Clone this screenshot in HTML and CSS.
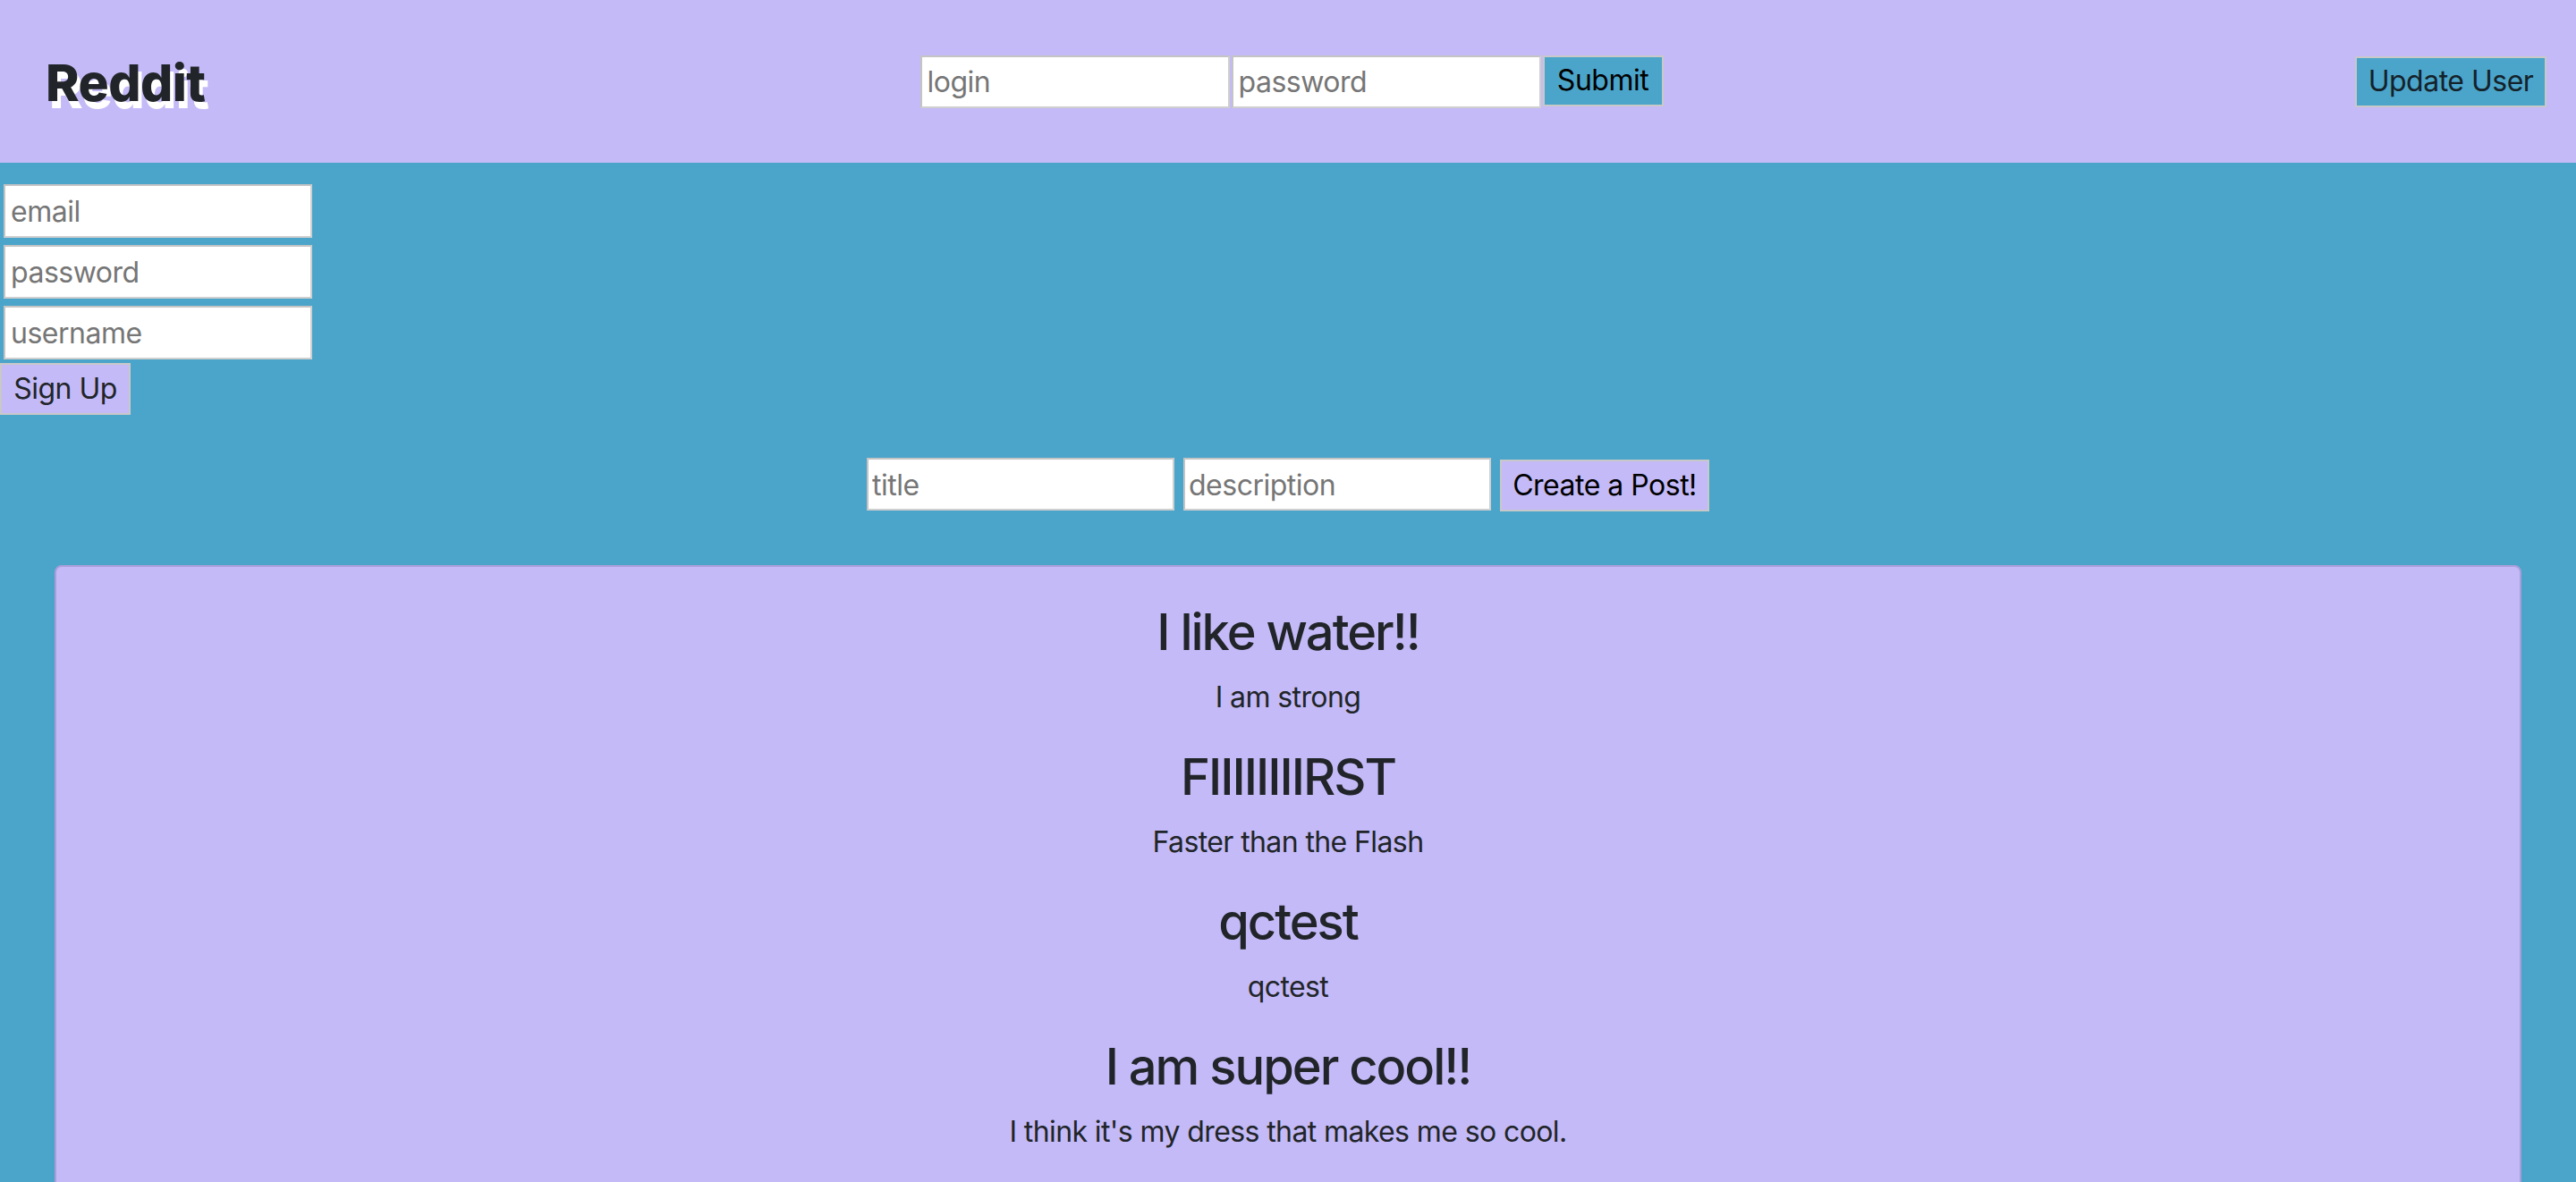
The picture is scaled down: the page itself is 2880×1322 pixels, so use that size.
FILE: index.html
```html
<!DOCTYPE html>
<html lang="en">
<head>
<meta charset="utf-8">
<title>Reddit</title>
<link rel="stylesheet" href="styles.css">
</head>
<body>
<header class="topbar">
  <div class="brand"><h1 class="logo">Reddit</h1></div>
  <form class="login">
    <input class="field" type="text" placeholder="login">
    <input class="field" type="password" placeholder="password">
    <button class="btn btn-blue btn-submit" type="button">Submit</button>
  </form>
  <button class="btn btn-blue btn-update" type="button">Update User</button>
</header>
<main class="content">
  <form class="signup">
    <input class="field field-signup" type="email" placeholder="email">
    <input class="field field-signup" type="password" placeholder="password">
    <input class="field field-signup" type="text" placeholder="username">
    <button class="btn btn-purple btn-signup" type="button">Sign Up</button>
  </form>
  <form class="newpost">
    <input class="field field-post" type="text" placeholder="title">
    <input class="field field-post" type="text" placeholder="description">
    <button class="btn btn-purple btn-create" type="button">Create a Post!</button>
  </form>
  <section class="card">
    <article class="post">
      <h3 class="post-title">I like water!!</h3>
      <p class="post-desc">I am strong</p>
    </article>
    <article class="post">
      <h3 class="post-title">FIIIIIIIIRST</h3>
      <p class="post-desc">Faster than the Flash</p>
    </article>
    <article class="post">
      <h3 class="post-title">qctest</h3>
      <p class="post-desc">qctest</p>
    </article>
    <article class="post">
      <h3 class="post-title">I am super cool!!</h3>
      <p class="post-desc">I think it's my dress that makes me so cool.</p>
    </article>
  </section>
</main>
</body>
</html>
```
FILE: styles.css
```css
html, body {
  margin: 0;
  padding: 0;
}
body {
  background: #4ba5ca;
  font-family: Inter, "Liberation Sans", sans-serif;
  color: #212529;
  font-size: 32px;
  line-height: 1.5;
  overflow: hidden;
  height: 1322px;
}
.topbar {
  background: #c4baf7;
  height: 182px;
  display: flex;
  align-items: center;
  justify-content: space-between;
  padding: 0 33px 0 51px;
  box-sizing: border-box;
}
.brand {
  width: 204px;
}
.logo {
  margin: 3px 0 0;
  font-size: 57px;
  font-weight: 800;
  line-height: normal;
  color: #212529;
  text-shadow: 4px 8px 0 #ffffff;
  letter-spacing: -0.6px;
}
.login {
  display: flex;
  align-items: flex-start;
  gap: 2px;
  margin: 0;
}
.field {
  box-sizing: border-box;
  width: 346px;
  height: 59px;
  margin: 0;
  padding: 1px 6px 0;
  border: 2px solid #cfcfcf;
  border-top-color: #c4c4c4;
  border-left-color: #c4c4c4;
  background: #ffffff;
  font-family: Inter, "Liberation Sans", sans-serif;
  font-size: 32px;
  letter-spacing: -0.5px;
  color: #212529;
  outline: none;
}
.field::placeholder {
  color: #767676;
}
.btn {
  box-sizing: border-box;
  height: 57px;
  margin: 0;
  padding: 0;
  border: 2px solid #c8c8c8;
  font-family: Inter, "Liberation Sans", sans-serif;
  font-size: 32px;
  letter-spacing: -0.5px;
  color: #000000;
  line-height: 1;
  cursor: pointer;
}
.btn-blue {
  background: #4ba5ca;
}
.btn-purple {
  background: #c4baf7;
}
.btn-submit {
  width: 135px;
}
.btn-update {
  width: 214px;
  color: #14222a;
}
.content {
  display: flex;
  flex-direction: column;
}
.signup {
  display: flex;
  flex-direction: column;
  align-items: flex-start;
  padding-top: 20px;
  margin: 0;
}
.field-signup {
  width: 345px;
  height: 60px;
  margin: 4px 0 4px 4px;
}
.btn-signup {
  width: 146px;
  height: 58px;
  margin-top: 0;
  color: #212529;
}
.newpost {
  display: flex;
  justify-content: center;
  align-items: flex-start;
  gap: 10px;
  margin: 48px 0 0;
}
.field-post {
  width: 344px;
  height: 59px;
  padding: 1px 4px 0;
}
.btn-create {
  width: 234px;
  height: 58px;
  margin-top: 2px;
}
.card {
  margin: 60px 61px 0;
  min-height: 900px;
  background: #c4baf7;
  border: 2px solid #a99ed9;
  border-radius: 8px;
  padding: 40px;
  text-align: center;
}
.post-title {
  margin: 0 0 16px;
  font-size: 56px;
  font-weight: 500;
  line-height: 66px;
  letter-spacing: -2px;
}
.post-desc {
  margin: 0 0 32px;
  font-size: 32px;
  line-height: 48px;
  letter-spacing: -0.6px;
}
```
